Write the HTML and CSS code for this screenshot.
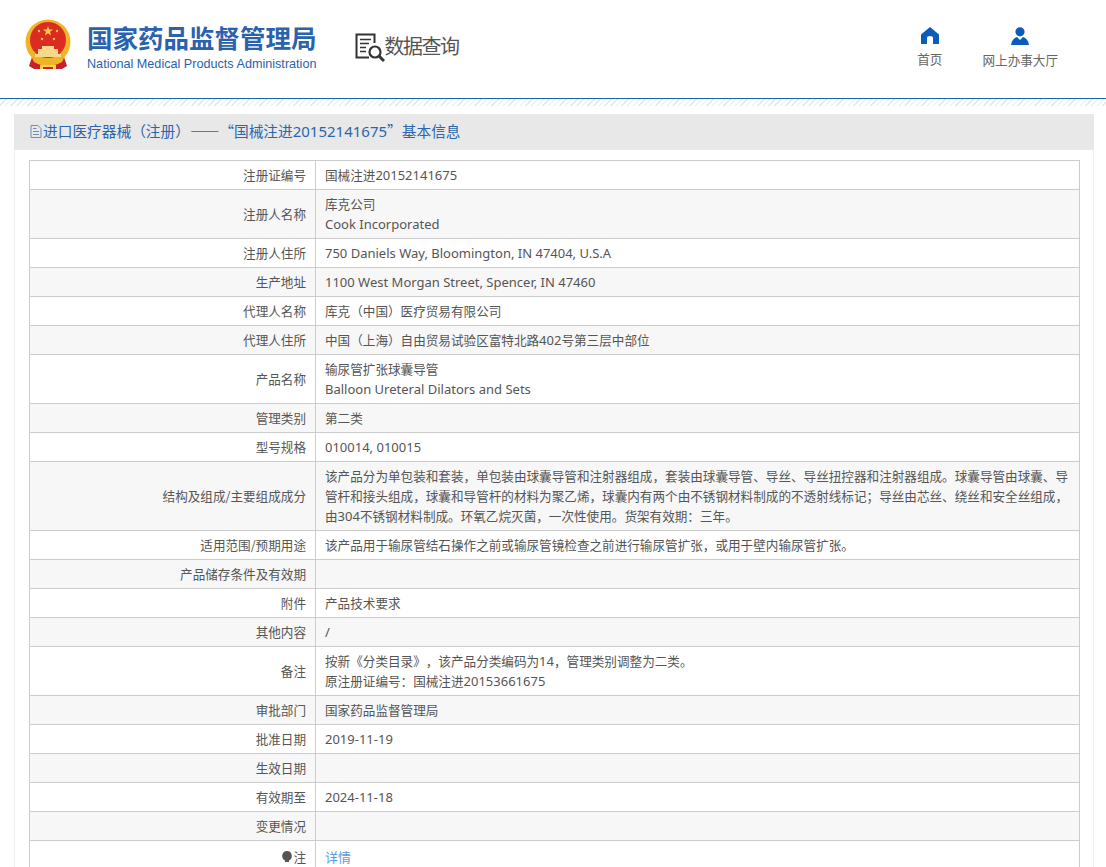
FILE: index.html
```html
<!DOCTYPE html>
<html lang="zh-CN">
<head>
<meta charset="utf-8">
<title>国家药品监督管理局 数据查询</title>
<link rel="stylesheet" href="styles.css">
</head>
<body>
<header class="header">
  <div class="brand">
    <svg class="emblem" viewBox="0 0 48 52" width="48" height="52" aria-hidden="true">
      <path d="M8 38 L5 47 L10 50 L38 50 L43 47 L40 38 Z" fill="#c8202a"/>
      <circle cx="24" cy="23" r="22.500" fill="#f0b429"/>
      <circle cx="24" cy="21" r="18" fill="#dc2b20"/>
      <polygon points="24,7 25.200,10.500 29,10.500 26,12.800 27.100,16.400 24,14.200 20.900,16.400 22,12.800 19,10.500 22.800,10.500" fill="#f7d14a"/>
      <circle cx="15" cy="12" r="1.200" fill="#f7d14a"/>
      <circle cx="33" cy="12" r="1.200" fill="#f7d14a"/>
      <circle cx="18" cy="20" r="1.200" fill="#f7d14a"/>
      <circle cx="30" cy="20" r="1.200" fill="#f7d14a"/>
      <path d="M11 35 H37 V38 H11 Z M14 30 H34 V35 H14 Z M18 27 H30 V30 H18 Z" fill="#f7d98a"/>
      <path d="M8 39 Q24 49 40 39 L38 43 Q24 51 10 43 Z" fill="#f0b429"/>
      <path d="M16 46 H32 V50 H29 V48 H19 V50 H16 Z" fill="#f7d14a"/>
    </svg>
    <div class="brand-text">
      <div class="brand-cn">国家药品监督管理局</div>
      <div class="brand-en">National Medical Products Administration</div>
    </div>
    <div class="query">
      <svg class="query-icon" viewBox="0 0 30 30" width="30" height="30" aria-hidden="true">
        <path d="M14 24.500 H1.500 V1.500 H19.500 V10" fill="none" stroke="#333" stroke-width="2"/>
        <path d="M5 6.500 H16 M5 10.500 H14 M5 14.500 H11 M5 18.500 H11" stroke="#333" stroke-width="1.500"/>
        <circle cx="20" cy="19" r="5.500" fill="none" stroke="#333" stroke-width="2.200"/>
        <path d="M24 23 L29 28" stroke="#333" stroke-width="3"/>
      </svg>
      <span class="query-text">数据查询</span>
    </div>
  </div>
  <nav class="nav">
    <a class="nav-item nav-home">
      <svg viewBox="0 0 18 17" width="18" height="17" aria-hidden="true">
        <path d="M9 0 L18 7.500 V17 H12 V11 Q12 9 9 9 Q6 9 6 11 V17 H0 V7.500 Z" fill="#0a5cb8"/>
      </svg>
      <span>首页</span>
    </a>
    <a class="nav-item nav-hall">
      <svg viewBox="0 0 18 18" width="18" height="18" aria-hidden="true">
        <circle cx="9" cy="4.800" r="4.600" fill="#0a5cb8"/>
        <path d="M0 18 Q1 11.500 6 10 L9 13 L12 10 Q17 11.500 18 18 Z" fill="#0a5cb8"/>
      </svg>
      <span>网上办事大厅</span>
    </a>
  </nav>
</header>
<div class="hatch"></div>
<main class="panel">
  <h2 class="panel-title">
    <svg class="doc-icon" viewBox="0 0 12 13" width="12" height="13" aria-hidden="true">
      <path d="M1 .5 H8 L11 3.500 V12.500 H1 Z M3 3.500 H6.500 M3 6.500 H9 M3 9.500 H9" fill="none" stroke="#6f8fb5" stroke-width="1"/>
    </svg><span>进口医疗器械（注册）——“国械注进<span class="la">20152141675</span>”基本信息</span>
  </h2>
  <table class="info">
    <tbody>
      <tr><th>注册证编号</th><td>国械注进<span class="la">20152141675</span></td></tr>
      <tr><th>注册人名称</th><td>库克公司<br><span class="la">Cook Incorporated</span></td></tr>
      <tr><th>注册人住所</th><td><span class="la">750 Daniels Way, Bloomington, IN 47404, U.S.A</span></td></tr>
      <tr><th>生产地址</th><td><span class="la">1100 West Morgan Street, Spencer, IN 47460</span></td></tr>
      <tr><th>代理人名称</th><td>库克（中国）医疗贸易有限公司</td></tr>
      <tr><th>代理人住所</th><td>中国（上海）自由贸易试验区富特北路<span class="la">402</span>号第三层中部位</td></tr>
      <tr><th>产品名称</th><td>输尿管扩张球囊导管<br><span class="la">Balloon Ureteral Dilators and Sets</span></td></tr>
      <tr><th>管理类别</th><td>第二类</td></tr>
      <tr><th>型号规格</th><td><span class="la">010014, 010015</span></td></tr>
      <tr><th>结构及组成/主要组成成分</th><td>该产品分为单包装和套装，单包装由球囊导管和注射器组成，套装由球囊导管、导丝、导丝扭控器和注射器组成。球囊导管由球囊、导管杆和接头组成，球囊和导管杆的材料为聚乙烯，球囊内有两个由不锈钢材料制成的不透射线标记；导丝由芯丝、绕丝和安全丝组成，由<span class="la">304</span>不锈钢材料制成。环氧乙烷灭菌，一次性使用。货架有效期：三年。</td></tr>
      <tr><th>适用范围/预期用途</th><td>该产品用于输尿管结石操作之前或输尿管镜检查之前进行输尿管扩张，或用于壁内输尿管扩张。</td></tr>
      <tr><th>产品储存条件及有效期</th><td></td></tr>
      <tr><th>附件</th><td>产品技术要求</td></tr>
      <tr><th>其他内容</th><td><span class="la">/</span></td></tr>
      <tr><th>备注</th><td>按新《分类目录》，该产品分类编码为<span class="la">14</span>，管理类别调整为二类。<br>原注册证编号：国械注进<span class="la">20153661675</span></td></tr>
      <tr><th>审批部门</th><td>国家药品监督管理局</td></tr>
      <tr><th>批准日期</th><td><span class="la">2019-11-19</span></td></tr>
      <tr><th>生效日期</th><td></td></tr>
      <tr><th>有效期至</th><td><span class="la">2024-11-18</span></td></tr>
      <tr><th>变更情况</th><td></td></tr>
      <tr class="last-row"><th><svg class="bulb" viewBox="0 0 10 13" width="10" height="13" aria-hidden="true"><path d="M5 0 A5 5 0 0 1 7 9.500 V11 H3 V9.500 A5 5 0 0 1 5 0 Z" fill="#555"/></svg>注</th><td><a class="detail">详情</a></td></tr>
    </tbody>
  </table>
</main>
</body>
</html>
```
FILE: styles.css
```css
html, body {
  height: 100%;
  overflow: hidden;
}
body {
  margin: 0;
  background: #fff;
  color: #555;
  font-family: "Noto Sans CJK SC", "Noto Sans", sans-serif;
  font-size: 12.6px;
  text-spacing-trim: space-all;
}
.la {
  font-family: "Noto Sans", "Noto Sans CJK SC", sans-serif;
  font-size: 13px;
  line-height: 1;
}
.header {
  display: flex;
  justify-content: space-between;
  height: 98px;
  box-sizing: border-box;
  padding: 19px 48px 0 24px;
}
.brand {
  display: flex;
  align-items: flex-start;
}
.emblem {
  display: block;
  flex: none;
}
.brand-text {
  margin-left: 15px;
  margin-top: 1px;
}
.brand-cn {
  color: #2a62ae;
  font-size: 25.5px;
  font-weight: 700;
  line-height: 34px;
  white-space: nowrap;
}
.brand-en {
  color: #2a62ae;
  font-family: "Liberation Sans", sans-serif;
  font-size: 12.640px;
  line-height: 16px;
  margin-top: 2px;
  white-space: nowrap;
}
.query {
  display: flex;
  align-items: center;
  margin-left: 38px;
  margin-top: 14px;
}
.query-icon {
  display: block;
  flex: none;
}
.query-text {
  color: #555;
  font-size: 20px;
  letter-spacing: -1.500px;
  line-height: 28px;
  margin-top: -5px;
}
.nav {
  display: flex;
  gap: 40px;
  padding-top: 8px;
}
.nav-item {
  display: flex;
  flex-direction: column;
  align-items: center;
  color: #666;
  line-height: 18px;
  gap: 6px;
}
.nav-item svg {
  display: block;
}
.hatch {
  height: 7px;
  border-top: 1px solid #1668b0;
  background: repeating-linear-gradient(135deg, #e6e6e2 0 1px, #fff 1px 4px);
}
.panel {
  margin: 8px 12px 0 14px;
  background: #fff;
  border-left: 1px solid #eee;
  border-right: 1px solid #eee;
}
.panel-title {
  display: flex;
  align-items: center;
  margin: 0 -1px;
  height: 36px;
  padding: 0 0 2px 16px;
  box-sizing: border-box;
  background: #e8e8e8;
  color: #2a65ad;
  font-size: 14.700px;
  font-weight: 400;
  line-height: 34px;
  white-space: nowrap;
}
.panel-title .la {
  font-size: 15px;
}
.doc-icon {
  display: block;
  flex: none;
  margin-right: 1px;
}
.info {
  width: 1051px;
  margin: 10px 0 0 14px;
  border-collapse: collapse;
  table-layout: fixed;
}
.info th, .info td {
  border: 1px solid #ccc;
  padding: 4px 9px;
  line-height: 20px;
  height: 20px;
  font-weight: 400;
  vertical-align: middle;
}
.info th {
  width: 267px;
  text-align: right;
}
.info tr:nth-child(even) {
  background: #f7f7f7;
}
.info .last-row th, .info .last-row td {
  padding-top: 6px;
  padding-bottom: 6px;
}
.bulb {
  vertical-align: -2px;
  margin-right: 1px;
}
.detail {
  color: #5a9be0;
  font-size: 13px;
}
```
